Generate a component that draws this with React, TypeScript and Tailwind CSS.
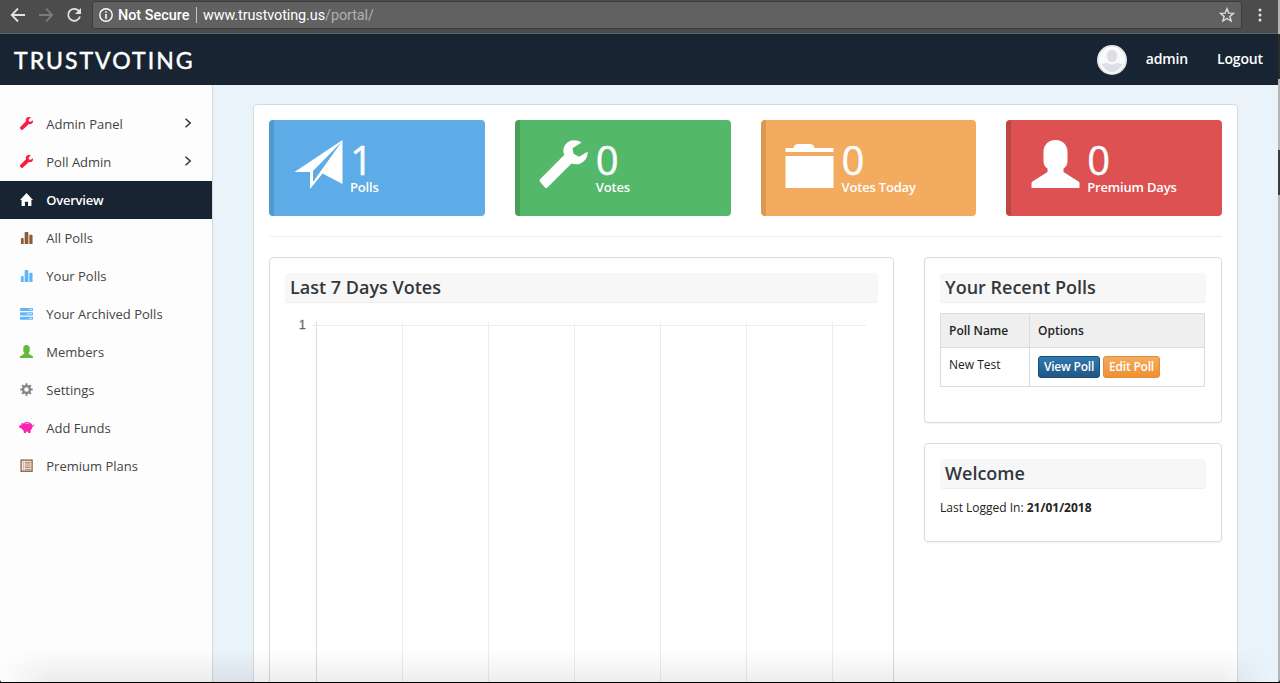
import React from 'react';

type IconProps = { className?: string };

const Wrench = ({ className }: IconProps) => (
  <svg viewBox="0 0 48 48" className={className} fill="currentColor">
    <path d="M42 2.500C36-1.500 28-.2 25 6c-1.500 3-1.500 6-.3 9L.8 39a2 2 0 0 0 0 3l4.400 5.200a2 2 0 0 0 3 0L32 23.600c4 1.500 9 .8 12-2.200 3-2.500 4.500-5.800 4-9.600l-8.500 5-5.500-3L33 8.300z" />
  </svg>
);

const SmallWrench = ({ className }: IconProps) => (
  <svg viewBox="0 0 48 48" className={className} fill="currentColor">
    <path d="M40 1C34-1 25 0 22 7c-1 3-1 6 0 9L1 37a5 5 0 0 0 0 6l4 4a4 4 0 0 0 5 0L33 26c5 1 10 0 13-4 2-3 2.500-6 1.500-10l-9 6-6.500-3 .5-6z" />
  </svg>
);

const Person = ({ className }: IconProps) => (
  <svg viewBox="0 0 48 48" className={className} fill="currentColor">
    <path d="M24 0c7.500 0 12 5 12 12v9c0 3.500-1.500 6-4 7.500V32l15 9.500c.7.500 1 1 1 2V47c0 .7-.3 1-1 1H1c-.7 0-1-.3-1-1v-3.500c0-1 .3-1.500 1-2L16 32v-3.500c-2.500-1.500-4-4-4-7.500v-9C12 5 16.500 0 24 0z" />
  </svg>
);

const Plane = ({ className }: IconProps) => (
  <svg viewBox="0 0 48 49" className={className} fill="currentColor">
    <path fillRule="evenodd" d="M48 0 0 32h15.500v17L28 33.500 48 44zM18.500 31 47 2 18.500 42z" />
  </svg>
);

const Folder = ({ className }: IconProps) => (
  <svg viewBox="0 0 48 44" className={className} fill="currentColor">
    <path d="M0 4h8c1-3 2-4 4-4h13c2 0 3 1 4 4h19v4H0zM0 12h48v32H0z" />
  </svg>
);

const Home = ({ className }: IconProps) => (
  <svg viewBox="0 0 14 14" className={className} fill="currentColor">
    <path d="M7 0 14 7.500h-1.700V14H8.700V9.500H5.300V14H1.700V7.500H0z" />
  </svg>
);

const Bars = ({ className }: IconProps) => (
  <svg viewBox="0 0 14 14" className={className} fill="currentColor">
    <path d="M1 8.500a1 1 0 0 1 1-1h1a1 1 0 0 1 1 1V14H1zM5 2a1 1 0 0 1 1-1h2a1 1 0 0 1 1 1v12H5zM10 5a1 1 0 0 1 1-1h1.500a1 1 0 0 1 1 1v9H10z" />
  </svg>
);

const Stack = ({ className }: IconProps) => (
  <svg viewBox="0 0 14 14" className={className}>
    <g fill="currentColor">
      <rect x="0" y="1" width="14" height="3.400" rx=".8" />
      <rect x="0" y="5.700" width="14" height="3.400" rx=".8" />
      <rect x="0" y="10.400" width="14" height="3.400" rx=".8" />
    </g>
    <path d="M9.500 2.600H13M7 7.400h6M9.500 12.200H13" stroke="#fff" strokeWidth="1" opacity=".75" />
  </svg>
);

const Gear = ({ className }: IconProps) => (
  <svg viewBox="0 0 14 14" className={className} fill="none" stroke="currentColor">
    <circle cx="7" cy="7" r="3.700" strokeWidth="2.500" />
    <path d="M7 .3v3M7 10.700v3M.3 7h3M10.700 7h3M2.300 2.300l2 2M9.700 9.700l2 2M2.300 11.700l2-2M9.700 4.300l2-2" strokeWidth="2.200" />
  </svg>
);

const Pig = ({ className }: IconProps) => (
  <svg viewBox="0 0 16 14" className={className} fill="currentColor">
    <path d="M2.800 2 5 2.700C6 1.700 7.500 1.200 9 1.200c2.800 0 4.700 1.500 5.200 3.700.7 0 .9-.5.9-1.200h.8c.1 1.500-.4 2.400-1.600 2.600-.1 1.600-.8 2.800-1.800 3.700l-.2 3H9.800v-1.500H7.500V13H5.200l-.4-2.700C3.700 9.700 3 8.900 2.600 7.800L.2 7.200V4.900l2.100-.4z" />
    <path d="M6.800 2.900c1.400-.6 2.800-.6 4.200 0" stroke="#fff" strokeWidth=".7" fill="none" />
  </svg>
);

const ListIcon = ({ className }: IconProps) => (
  <svg viewBox="0 0 14 14" className={className} fill="none" stroke="currentColor">
    <rect x="1.200" y="1.200" width="11.800" height="12" strokeWidth="1.400" />
    <path d="M3 3.500h1.200M5 3.500h6.500M3 5.500h1.200M5 5.500h6.500M3 7.500h1.200M5 7.500h6.500M3 9.500h1.200M5 9.500h6.500M3 11.500h1.200M5 11.500h6.500" strokeWidth="1.100" opacity=".85" />
  </svg>
);

const Chevron = () => (
  <svg viewBox="0 0 8 10" className="-mt-[5px] ml-auto mr-[20px] h-[10px] w-[8px]" fill="none" stroke="#333" strokeWidth="1.500">
    <path d="M1.500.8 6.200 5 1.500 9.200" />
  </svg>
);

const NAV = [
  { label: 'Admin Panel', Icon: SmallWrench, color: 'text-[#fa1c44]', arrow: true },
  { label: 'Poll Admin', Icon: SmallWrench, color: 'text-[#fa1c44]', arrow: true },
  { label: 'Overview', Icon: Home, color: 'text-white', active: true },
  { label: 'All Polls', Icon: Bars, color: 'text-[#8f5c36]' },
  { label: 'Your Polls', Icon: Bars, color: 'text-[#5eb5fa]' },
  { label: 'Your Archived Polls', Icon: Stack, color: 'text-[#5eb5fa]' },
  { label: 'Members', Icon: Person, color: 'text-[#67b93e]' },
  { label: 'Settings', Icon: Gear, color: 'text-[#858585]' },
  { label: 'Add Funds', Icon: Pig, color: 'text-[#f725b2]', wide: true },
  { label: 'Premium Plans', Icon: ListIcon, color: 'text-[#8f5c36]' },
];

const STATS = [
  { value: '1', label: 'Polls', Icon: Plane, color: 'bg-[#5dace7] border-[#5199cf]', icon: 'h-[49px] w-[49px] mt-[20px]' },
  { value: '0', label: 'Votes', Icon: Wrench, color: 'bg-[#54b86a] border-[#489f5b]', icon: 'h-[48px] w-[49px] mt-[20px] -ml-px mr-px' },
  { value: '0', label: 'Votes Today', Icon: Folder, color: 'bg-[#f3ac5f] border-[#d79954]', icon: 'h-[44px] w-[49px] mt-[24px] -ml-px mr-px' },
  { value: '0', label: 'Premium Days', Icon: Person, color: 'bg-[#dd5153] border-[#bd4647]', icon: 'h-[48px] w-[49px] mt-[20px]' },
];

const Browser = () => (
  <div className="flex h-[34px] w-[1280px] shrink-0 border-b border-[#5c6469] bg-[#4c4c4c] pt-px font-[Roboto,sans-serif] text-[14.400px]">
    <svg viewBox="0 0 92 28" className="h-[28px] w-[92px] shrink-0" fill="none" stroke="#e2e2e2" strokeWidth="1.800">
      <path d="M25 14H12M18 7.500 11.700 14l6.300 6.500" />
      <path d="M39 14h13M46 7.500l6.300 6.500-6.300 6.500" stroke="#7a7a7a" />
      <path d="M78.700 9.800A6 6 0 1 0 80 15.500" />
      <path d="M81 7v6h-6z" fill="#e2e2e2" stroke="none" />
    </svg>
    <div className="flex h-[28px] w-[1150px] shrink-0 items-center rounded-[3px] border border-[#3c3c3c] bg-[#616161] pl-[6px] text-white">
      <svg viewBox="0 0 14 14" className="h-[14px] w-[14px]" fill="none" stroke="#fff" strokeWidth="1.400">
        <circle cx="7" cy="7" r="6.200" />
        <path d="M7 3.200v1.600M7 6v4.800" strokeWidth="1.600" />
      </svg>
      <span className="ml-[5px] w-[73px] whitespace-nowrap pt-[2px] font-medium">Not Secure</span>
      <span className="ml-[5px] h-[16px] w-px bg-[#c4c4c4]" />
      <span className="ml-[6px] whitespace-nowrap pt-[2px] tracking-[-0.08px]">
        www.trustvoting.us<span className="text-[#b0b0b0]">/portal/</span>
      </span>
      <svg viewBox="0 0 16 16" className="ml-auto mr-[6px] h-[16px] w-[16px]" fill="none" stroke="#dedede" strokeWidth="1.400">
        <path d="m8 1.700 1.800 4.400 4.700.3-3.600 3 1.200 4.600L8 11.500 3.900 14l1.200-4.600-3.600-3 4.700-.3z" />
      </svg>
    </div>
    <svg viewBox="0 0 38 28" className="h-[28px] w-[38px] shrink-0" fill="#e2e2e2">
      <circle cx="18" cy="9" r="1.500" />
      <circle cx="18" cy="14" r="1.500" />
      <circle cx="18" cy="19" r="1.500" />
    </svg>
  </div>
);

const PanelTitle = ({ children }: { children: React.ReactNode }) => (
  <h2 className="h-[30px] rounded-[4px] border-b border-[#ededed] bg-[#f7f7f7] pl-[5px] text-[18px] font-semibold leading-[28px] text-[#32383d]">
    {children}
  </h2>
);

const panel = 'rounded-[4px] border border-[#dcdcdc] bg-white p-[15px] shadow-[0_1px_2px_rgba(0,0,0,0.06)]';

const Chart = () => (
  <svg viewBox="0 0 593 400" className="mt-[10px] h-[400px] w-[593px]" stroke="#ededed">
    <text x="14" y="16" fontSize="12" fill="#666" stroke="#666" strokeWidth=".3" fontFamily="Liberation Sans, Arial, sans-serif">1</text>
    <path d="M26 12.500H581M117.500 9V400M203.500 9V400M289.500 9V400M375.500 9V400M461.500 9V400M547.500 9V400" />
    <path d="M31.500 9V400" stroke="#dcdcdc" />
  </svg>
);

export default function App() {
  return (
    <div className="relative flex h-[683px] w-[1280px] overflow-hidden bg-[#b5b5b5] font-['Open_Sans',sans-serif]">
      <div className="flex h-[683px] w-[1278px] shrink-0 flex-col overflow-hidden">
        <Browser />
        <header className="flex h-[51px] shrink-0 items-center bg-[#182432] pl-[14px] pr-[15px] text-white">
          <span className="w-[178px] whitespace-nowrap pt-px font-[Lato,sans-serif] text-[23px] leading-none tracking-[2.050px] [-webkit-text-stroke:0.5px_white]">TRUSTVOTING</span>
          <svg viewBox="0 0 30 30" className="ml-auto h-[30px] w-[30px]">
            <circle cx="15" cy="15" r="15" fill="#e1e3e7" />
            <circle cx="15" cy="15" r="13.300" fill="#fafafa" />
            <ellipse cx="15" cy="11" rx="5.300" ry="6.200" fill="#dddfe4" />
            <path d="M5 19.500c3-1.700 5-1.700 7-1 1.500 1.300 4.500 1.300 6 0 2-.7 4-.7 7 1-2 4.500-5.500 7.500-10 7.500s-8-3-10-7.500z" fill="#dddfe4" />
          </svg>
          <span className="-mt-[2px] ml-[19px] text-[14px] font-semibold tracking-[-0.150px]">admin</span>
          <span className="-mt-[2px] ml-[29px] text-[14px] font-semibold tracking-[-0.150px]">Logout</span>
        </header>
        <div className="flex h-[598px] w-full">
          <nav className="w-[213px] shrink-0 border-r border-[#d2dae1] bg-[#fdfdfd] pt-[20px]">
            {NAV.map(({ label, Icon, color, arrow, active, wide }) => (
              <div
                key={label}
                className={
                  'flex h-[38px] items-center pt-[2px] text-[13px] ' +
                  (wide ? 'pl-[19px] ' : 'pl-[20px] ') +
                  (active ? 'bg-[#182432] font-semibold tracking-[-0.250px] text-white' : 'text-[#444]')
                }
              >
                <Icon className={'-mt-[4px] shrink-0 ' + (wide ? 'h-[13px] w-[15px] ' : 'h-[13px] w-[13px] ') + color} />
                <span className={wide ? 'ml-[12.300px]' : 'ml-[13.300px]'}>{label}</span>
                {arrow && <Chevron />}
              </div>
            ))}
          </nav>
          <main className="flex-1 bg-[#eaf2fa] pl-[40px] pt-[19px]">
            <div className="h-[620px] w-[985px] rounded-[4px] border border-[#d3dbe1] bg-white px-[15px] pt-[15px]">
              <div className="grid grid-cols-4 gap-[30px]">
                {STATS.map(({ value, label, Icon, color, icon }) => (
                  <div key={label} className={'flex h-[96px] rounded-[4px] border-l-[5px] pl-[20px] text-white ' + color}>
                    <Icon className={'shrink-0 ' + icon} />
                    <div className="ml-[7px] pt-[20px]">
                      <div className="h-[38px] text-[40px] leading-[38px] [-webkit-text-stroke:0.4px_white]">
                        <span className="inline-block pt-px">{value}</span>
                      </div>
                      <div className="whitespace-nowrap text-[13px] font-semibold leading-[18px] tracking-[-0.180px]">{label}</div>
                    </div>
                  </div>
                ))}
              </div>
              <div className="mt-[20px] h-px bg-[#ededed]" />
              <div className="mt-[20px] flex items-start gap-[30px]">
                <section className={'h-[480px] w-[625px] shrink-0 ' + panel}>
                  <PanelTitle>Last 7 Days Votes</PanelTitle>
                  <Chart />
                </section>
                <div className="w-[298px]">
                  <section className={'h-[166px] ' + panel}>
                    <PanelTitle>Your Recent Polls</PanelTitle>
                    <table className="mt-[10px] w-[265px] table-fixed border-collapse text-[12px] text-[#222]">
                      <thead>
                        <tr className="h-[34px] bg-[#efefef] text-left">
                          <th className="w-[89px] border border-[#dcdcdc] px-[8px] font-semibold">Poll Name</th>
                          <th className="border border-[#dcdcdc] px-[8px] font-semibold">Options</th>
                        </tr>
                      </thead>
                      <tbody>
                        <tr className="h-[39px]">
                          <td className="border border-[#dcdcdc] px-[8px] pt-[8px] align-top leading-[18px]">New Test</td>
                          <td className="border border-[#dcdcdc] px-[8px]">
                            <div className="flex gap-[3px] text-[12px] font-semibold leading-[20px] text-white">
                              <button className="h-[22px] w-[62px] whitespace-nowrap rounded-[3px] border border-[#1d4f76] bg-linear-to-b from-[#2e7bb2] to-[#215681] tracking-[-0.2px]">View Poll</button>
                              <button className="h-[22px] w-[57px] whitespace-nowrap rounded-[3px] border border-[#e48e39] bg-linear-to-b from-[#f3ac5f] to-[#ef9030] tracking-[-0.2px]">Edit Poll</button>
                            </div>
                          </td>
                        </tr>
                      </tbody>
                    </table>
                  </section>
                  <section className={'mt-[20px] h-[99px] ' + panel}>
                    <PanelTitle>Welcome</PanelTitle>
                    <p className="mt-[9px] text-[12px] leading-[20px] text-[#222]">
                      Last Logged In: <b>21/01/2018</b>
                    </p>
                  </section>
                </div>
              </div>
            </div>
          </main>
        </div>
      </div>
      <div className="flex w-[2px] flex-col">
        <div className="mt-[34px] h-[45px] bg-[#2b2b2b]" />
        <div className="mt-[71px] h-[45px] bg-[#3c3c3c]" />
      </div>
      <div className="pointer-events-none absolute bottom-px left-0 h-[32px] w-full bg-linear-to-b from-transparent to-black/7 mask-[linear-gradient(to_right,transparent,black_50px,black_1220px,transparent_1270px)]" />
      <div className="absolute bottom-0 left-0 h-px w-full bg-black" />
      <svg viewBox="0 0 4 4" className="absolute bottom-0 left-0 h-[4px] w-[4px]">
        <path d="M0 0q0 4 4 4H0z" />
      </svg>
      <svg viewBox="0 0 4 4" className="absolute bottom-0 right-0 h-[4px] w-[4px]">
        <path d="M4 0Q4 4 0 4h4z" />
      </svg>
    </div>
  );
}
